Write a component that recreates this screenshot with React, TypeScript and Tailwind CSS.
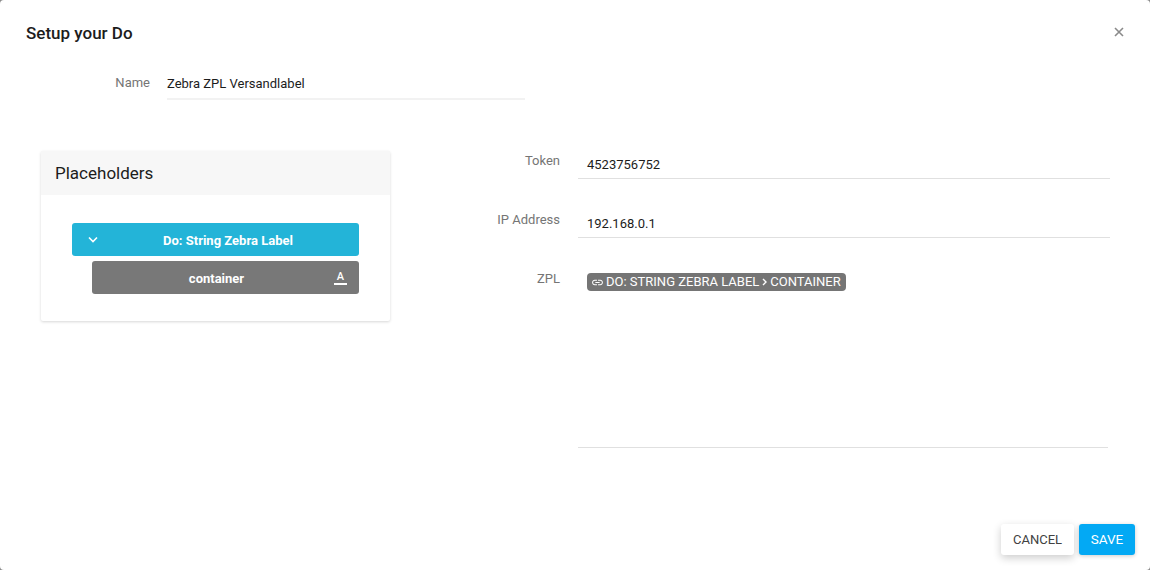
import React from "react";

function Field({ label, value }: { label: string; value: string }) {
  return (
    <div className="flex items-start h-[59px]">
      <div className="w-[120px] text-right text-[13px] leading-[18px] text-[#757575] pt-[1px]">{label}</div>
      <div className="ml-[18px] flex-1 h-[28px] border-b border-[#e0e0e0] pl-[9px] pt-[5px] text-[13px] leading-[18px] text-[#1c1c1c]">
        {value}
      </div>
    </div>
  );
}

export default function App() {
  return (
    <div className="w-[1150px] h-[570px] bg-[#8a8a8a] overflow-hidden font-['Roboto',sans-serif]">
      <div className="w-full h-full bg-white rounded-[4px] relative flex flex-col">
        <button className="absolute left-[1112px] top-[25px] w-[14px] h-[14px] flex items-center justify-center">
          <svg width="10" height="10" viewBox="0 0 10 10" fill="none" stroke="#8a8a8a" strokeWidth="1.6">
            <path d="M1 1l8 8M9 1l-8 8" />
          </svg>
        </button>

        <h2 className="ml-[26px] mt-[23px] text-[17px] leading-[21px] font-medium text-[#1c1c1c]">Setup your Do</h2>

        <div className="flex items-start mt-[19px] h-[36px]">
          <div className="w-[150px] text-right text-[13px] leading-[18px] text-[#757575] pt-[11px]">Name</div>
          <div className="ml-[17px] w-[358px] h-[37px] border-b-2 border-[#f2f2f2] text-[13px] leading-[18px] text-[#1c1c1c] pt-[12px]">
            Zebra ZPL Versandlabel
          </div>
        </div>

        <div className="flex items-start mt-[52px]">
          <section className="ml-[41px] w-[349px] h-[170px] bg-white rounded-[2px] shadow-[0_1px_3px_rgba(0,0,0,0.16)]">
            <div className="h-[44px] bg-[#f7f7f7] pl-[14px] pt-[12px] text-[17px] leading-[20px] text-[#1c1c1c]">Placeholders</div>
            <div className="pt-[28px] pl-[31px] flex flex-col gap-[5px]">
              <div className="w-[287px] h-[33px] pl-[25px] pt-[2px] bg-[#23b4d8] rounded-[3px] relative flex items-center justify-center text-[13px] font-bold text-white">
                <svg className="absolute left-[16px] top-[13px]" width="10" height="8" viewBox="0 0 10 8" fill="none" stroke="white" strokeWidth="1.6">
                  <path d="M1 1.5l4 4 4-4" />
                </svg>
                Do: String Zebra Label
              </div>
              <div className="ml-[20px] w-[267px] h-[33px] pr-[18px] pt-[2px] bg-[#787878] rounded-[3px] relative flex items-center justify-center text-[13px] font-bold text-white">
                container
                <div className="absolute right-[12px] top-[9px] w-[13px] flex flex-col items-center">
                  <span className="text-[11px] leading-[13px] font-medium">A</span>
                  <span className="w-[13px] h-[2px] bg-white" />
                </div>
              </div>
            </div>
          </section>

          <div className="ml-[50px] w-[670px] flex flex-col">
            <Field label="Token" value="4523756752" />
            <Field label="IP Address" value="192.168.0.1" />
            <div className="flex items-start">
              <div className="w-[120px] text-right text-[13px] leading-[18px] text-[#757575] pt-[1px]">ZPL</div>
              <div className="ml-[18px] w-[530px] h-[179px] border-b border-[#e0e0e0] pl-[9px] pt-[4px]">
                <span className="inline-flex items-center h-[18px] bg-[#757575] rounded-[4px] pl-[4px] pr-[5px] text-[13px] leading-[18px] text-white whitespace-nowrap align-top">
                  <svg width="13" height="13" viewBox="0 0 24 24" fill="white" className="mr-[2px]">
                    <path d="M3.9 12c0-1.71 1.39-3.1 3.1-3.1h4V7H7c-2.76 0-5 2.24-5 5s2.24 5 5 5h4v-1.9H7c-1.71 0-3.1-1.39-3.1-3.1zM8 13h8v-2H8v2zm9-6h-4v1.9h4c1.71 0 3.1 1.39 3.1 3.1s-1.39 3.1-3.1 3.1h-4V17h4c2.76 0 5-2.24 5-5s-2.24-5-5-5z" />
                  </svg>
                  <span>DO: STRING ZEBRA LABEL</span>
                  <svg width="5" height="8" viewBox="0 0 5 8" fill="none" stroke="white" strokeWidth="1.4" className="ml-[3px] mr-[3px]">
                    <path d="M1 1l3 3-3 3" />
                  </svg>
                  <span>CONTAINER</span>
                </span>
              </div>
            </div>
          </div>
        </div>

        <div className="absolute right-[15px] bottom-[15px] flex gap-[5px]">
          <button className="w-[73px] h-[31px] bg-white rounded-[3px] text-[13px] text-[#424242] shadow-[0_3px_8px_rgba(0,0,0,0.2)]">CANCEL</button>
          <button className="w-[56px] h-[31px] bg-[#03a9f4] rounded-[3px] text-[13.5px] text-white shadow-[0_1px_4px_rgba(0,0,0,0.2)]">SAVE</button>
        </div>
      </div>
    </div>
  );
}
